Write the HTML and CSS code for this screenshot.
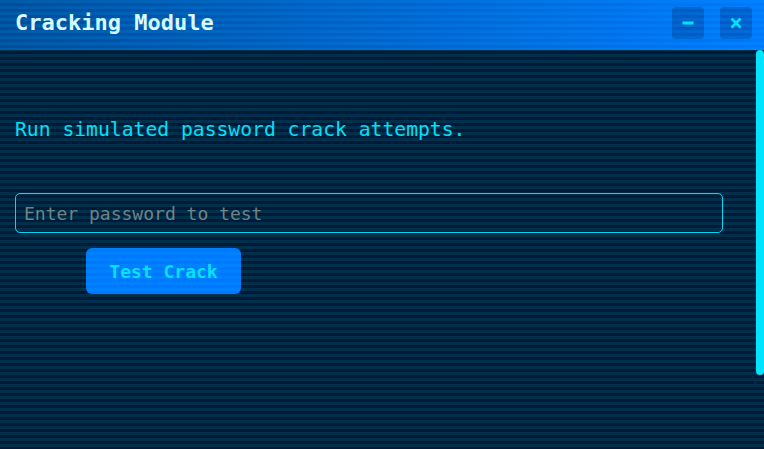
FILE: index.html
```html
<!DOCTYPE html>
<html>
<head lang="en">
    <meta charset="UTF-8">
    <title>Cracking Module</title>
    <link rel="stylesheet" href="styles.css">
</head>
<body>

    <div class="window">
        <header class="titlebar">
            <h1 class="title">Cracking Module</h1>
            <div class="controls">
                <button class="ctrl" title="Minimize">
                    <svg width="12" height="4" viewBox="0 0 12 4"><rect x="0.5" y="0.5" width="11" height="3" fill="#00e5ff"/></svg>
                </button>
                <button class="ctrl" title="Close">
                    <svg width="12" height="12" viewBox="0 0 12 12"><path d="M1.5 1.5 L10.5 10.5 M10.5 1.5 L1.5 10.5" stroke="#00e5ff" stroke-width="2.6" fill="none"/></svg>
                </button>
            </div>
        </header>
        <main class="body">
            <div class="module">
                <p class="intro">Run simulated password crack attempts.</p>
                <input class="pw" type="text" placeholder="Enter password to test">
                <button class="crack">Test Crack</button>
            </div>
            <!-- scrollbar thumb, drawn by hand -->
            <div class="thumb"></div>
        </main>
    </div>

    <div class="scanlines"></div>

</body>
</html>
```

FILE: styles.css
```css
* {
    padding: 0;
    margin: 0;
    box-sizing: border-box;
}
html, body {
    height: 100%;
}
body {
    overflow: hidden;
    background-color: #001b38;
    font-family: "DejaVu Sans Mono", "Liberation Mono", monospace;
}
.window {
    display: flex;
    flex-direction: column;
    height: 100vh;
}
.titlebar {
    flex: none;
    height: 50px;
    display: flex;
    align-items: center;
    justify-content: space-between;
    padding: 0 12px 4px 15px;
    background: linear-gradient(90deg, #004c9c, #0077ff);
}
.title {
    font-size: 22px;
    line-height: 1;
    font-weight: bold;
    color: #e0fbff;
}
.controls {
    display: flex;
    gap: 16px;
}
.ctrl {
    width: 32px;
    height: 32px;
    border: none;
    border-radius: 4px;
    background-color: rgba(0, 20, 70, 0.25);
    display: flex;
    align-items: center;
    justify-content: center;
    cursor: pointer;
}
.body {
    flex: 1;
    position: relative;
    overflow: hidden;
}
.thumb {
    position: absolute;
    top: 0;
    right: 0;
    width: 8px;
    height: 325px;
    border-radius: 4px;
    background-color: #00e5ff;
}
.module {
    padding: 68px 15px 0;
}
.intro {
    font-size: 19.7px;
    line-height: 24px;
    color: #00e0f8;
}
.pw {
    display: block;
    width: 708px;
    height: 40px;
    margin-top: 51px;
    padding: 0 8px;
    border: 1px solid #00d8f5;
    border-radius: 5px;
    background: transparent;
    font-family: "DejaVu Sans Mono", "Liberation Mono", monospace;
    font-size: 18px;
    color: #00e5ff;
    outline: none;
}
.pw::placeholder {
    color: #7c7c7c;
}
.crack {
    display: block;
    width: 155px;
    height: 46px;
    margin: 15px 0 0 71px;
    border: none;
    border-radius: 6px;
    background-color: #0077ff;
    color: #00e5ff;
    font-family: "DejaVu Sans Mono", "Liberation Mono", monospace;
    font-size: 18px;
    font-weight: bold;
    cursor: pointer;
}
.scanlines {
    position: fixed;
    top: 0;
    left: 0;
    right: 0;
    bottom: 0;
    pointer-events: none;
    background: repeating-linear-gradient(to bottom, rgba(0, 229, 255, 0.1) 0, rgba(0, 229, 255, 0.1) 3px, transparent 3px, transparent 6px);
}
```
